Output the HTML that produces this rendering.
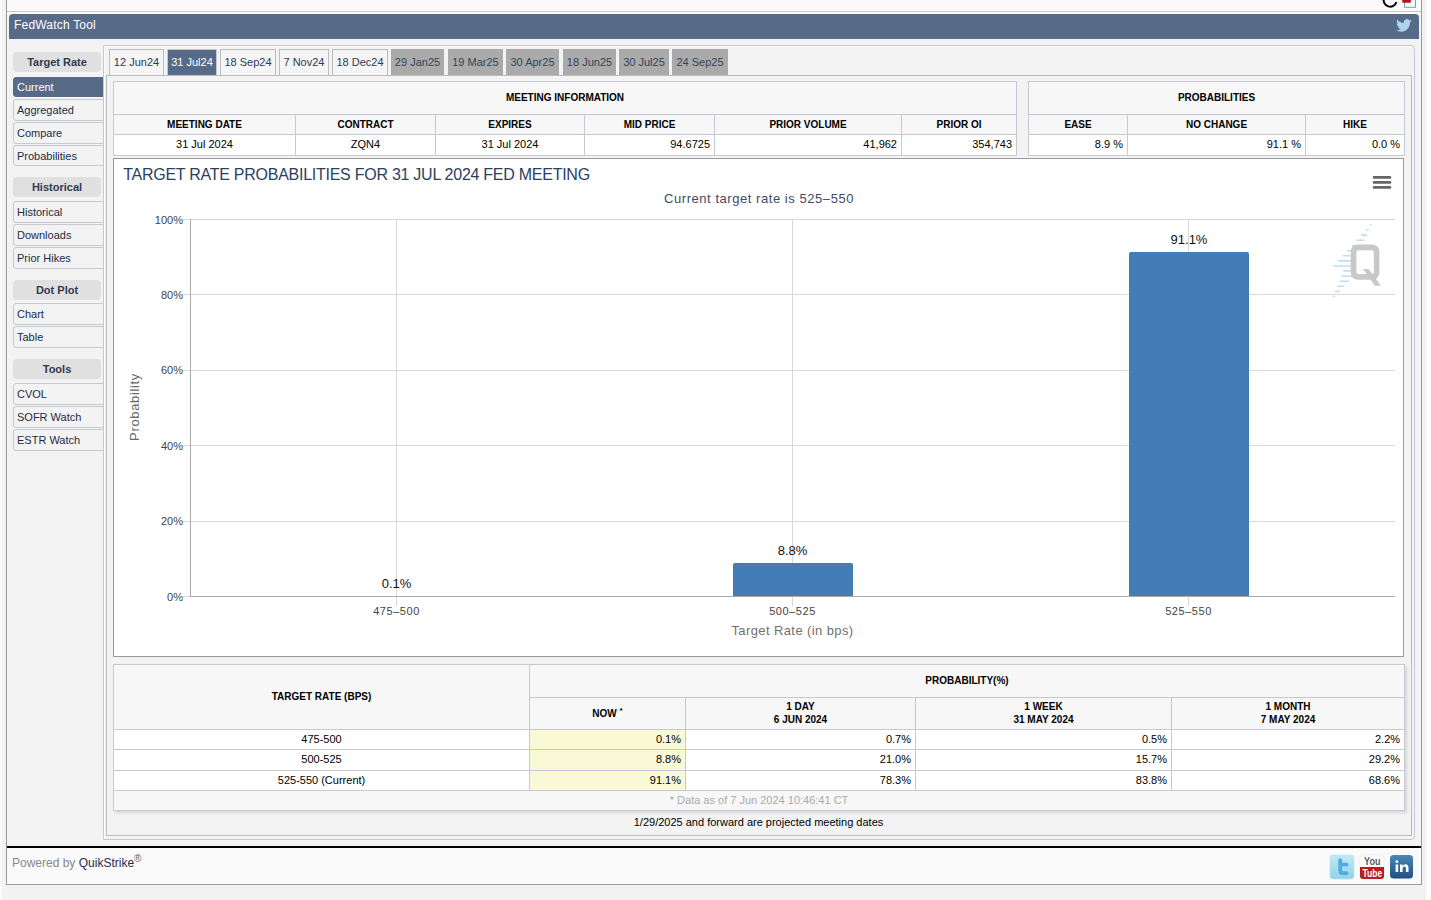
<!DOCTYPE html>
<html><head><meta charset="utf-8">
<style>
*{box-sizing:border-box;margin:0;padding:0}
html,body{width:1431px;height:900px;overflow:hidden;background:#fff;font-family:"Liberation Sans",sans-serif;font-size:11px;color:#000}
.a{position:absolute}
#bgstrip{left:0;top:0;width:1426px;height:900px;background:#f2f2f2;border-left:2px solid #fafafa}
#outer{left:6px;top:-2px;width:1416px;height:887px;border:1px solid #999;background:#f3f3f3}
#topwhite{left:7px;top:0;width:1414px;height:11px;background:#fafafa}
#topline{left:7px;top:11px;width:1414px;height:1px;background:#c8c8c8}
#topwhite2{left:7px;top:12px;width:1414px;height:2px;background:#fafafa}
#hdr{left:9px;top:14px;width:1410px;height:25px;background:#576a87;border-radius:4px 4px 0 0;color:#fff;font-size:12px;line-height:23px;padding-left:5px;letter-spacing:0.2px}
.sbh{left:13px;width:88px;height:20px;background:#e0e0e0;border-radius:4px;font-weight:bold;text-align:center;line-height:20px;color:#2e3a52;font-size:11px}
.sbb{left:13px;width:92px;height:22px;border:1px solid #c6c8d2;border-radius:3px;background:#f3f3f3;line-height:21px;padding-left:3px;color:#1d2a44;font-size:11px}
.sbb.act{background:#576a87;border-color:#576a87;color:#fff}
#tabpanel{left:103px;top:45px;width:1312px;height:795px;border:1px solid #c6c8d2;border-radius:0 4px 4px 0;background:#f3f3f3;box-shadow:inset 1px 1px 0 #fcfcfc}
#content{left:106px;top:75px;width:1306px;height:761px;border:1px solid #bbb;background:#f3f3f3}
.tab{top:49px;height:26px;border:1px solid #bdbdbd;border-bottom:none;background:#f5f5f5;color:#2c3a52;font-size:11px;line-height:24px;text-align:center}
.tab.act{background:#576a87;color:#fff;border-color:#c6c8d2}
.tab.proj{background:#aaa;border-color:#aaa;color:#36445a}
table{border-collapse:collapse;table-layout:fixed}
td,th{border:1px solid #c6c8d2;font-size:11px;padding:0 4px}
th{font-weight:bold;background:#f7f7f7;text-align:center;font-size:10px}
td{background:#fff}
td.y{background:#f9f9d6}
.dr td{padding-bottom:2px}
#bt th{padding-bottom:2px}
.hr th{padding-bottom:2px}
.r{text-align:right}
.c{text-align:center}
#chart{left:113px;top:158px;width:1291px;height:499px;border:1px solid #999;background:#fff;overflow:hidden}
</style></head><body>
<div class="a" id="bgstrip"></div>
<div class="a" id="outer"></div>
<div class="a" id="topwhite"></div>
<div class="a" id="topline"></div>
<div class="a" id="topwhite2"></div>
<div class="a" id="hdr">FedWatch Tool</div>

<!-- sidebar -->
<div class="a sbh" style="top:52px">Target Rate</div>
<div class="a sbb act" style="top:77px;height:20px;line-height:18px;padding-top:0">Current</div>
<div class="a sbb" style="top:99px;height:22px;line-height:20px">Aggregated</div>
<div class="a sbb" style="top:122px;height:22px;line-height:20px">Compare</div>
<div class="a sbb" style="top:145px;height:21px;line-height:20px">Probabilities</div>
<div class="a sbh" style="top:177px">Historical</div>
<div class="a sbb" style="top:201px">Historical</div>
<div class="a sbb" style="top:224px">Downloads</div>
<div class="a sbb" style="top:247px">Prior Hikes</div>
<div class="a sbh" style="top:280px">Dot Plot</div>
<div class="a sbb" style="top:303px">Chart</div>
<div class="a sbb" style="top:326px">Table</div>
<div class="a sbh" style="top:359px">Tools</div>
<div class="a sbb" style="top:383px">CVOL</div>
<div class="a sbb" style="top:406px">SOFR Watch</div>
<div class="a sbb" style="top:429px">ESTR Watch</div>

<div class="a" id="tabpanel"></div>
<div class="a" id="content"></div>

<!-- tabs -->
<div class="a tab" style="left:109px;width:55px">12 Jun24</div>
<div class="a tab act" style="left:167px;width:50px">31 Jul24</div>
<div class="a tab" style="left:220px;width:56px">18 Sep24</div>
<div class="a tab" style="left:279px;width:50px">7 Nov24</div>
<div class="a tab" style="left:332px;width:56px">18 Dec24</div>
<div class="a tab proj" style="left:391px;width:53px">29 Jan25</div>
<div class="a tab proj" style="left:448px;width:55px">19 Mar25</div>
<div class="a tab proj" style="left:506px;width:53px">30 Apr25</div>
<div class="a tab proj" style="left:563px;width:53px">18 Jun25</div>
<div class="a tab proj" style="left:619px;width:50px">30 Jul25</div>
<div class="a tab proj" style="left:672px;width:56px">24 Sep25</div>

<!-- meeting info table -->
<table class="a" style="left:113px;top:81px;width:903px">
<colgroup><col style="width:182px"><col style="width:140px"><col style="width:149px"><col style="width:130px"><col style="width:187px"><col style="width:115px"></colgroup>
<tr style="height:33px" class="hr"><th colspan="6">MEETING INFORMATION</th></tr>
<tr style="height:20px"><th>MEETING DATE</th><th>CONTRACT</th><th>EXPIRES</th><th>MID PRICE</th><th>PRIOR VOLUME</th><th>PRIOR OI</th></tr>
<tr style="height:21px" class="dr"><td class="c">31 Jul 2024</td><td class="c">ZQN4</td><td class="c">31 Jul 2024</td><td class="r">94.6725</td><td class="r">41,962</td><td class="r">354,743</td></tr>
</table>

<table class="a" style="left:1028px;top:81px;width:376px">
<colgroup><col style="width:99px"><col style="width:178px"><col style="width:99px"></colgroup>
<tr style="height:33px" class="hr"><th colspan="3">PROBABILITIES</th></tr>
<tr style="height:20px"><th>EASE</th><th>NO CHANGE</th><th>HIKE</th></tr>
<tr style="height:21px" class="dr"><td class="r">8.9 %</td><td class="r">91.1 %</td><td class="r">0.0 %</td></tr>
</table>

<div class="a" id="chart"></div>

<svg class="a" style="left:0;top:0" width="1431" height="900">
<g font-family="Liberation Sans, sans-serif">
<text x="123.2" y="180" font-size="16" fill="#2a3f63" letter-spacing="-0.26">TARGET RATE PROBABILITIES FOR 31 JUL 2024 FED MEETING</text>
<text x="759" y="202.5" font-size="13" fill="#3c4b66" text-anchor="middle" letter-spacing="0.55">Current target rate is 525–550</text>
<path d="M1374 177.4H1390M1374 182.4H1390M1374 187.4H1390" stroke="#666" stroke-width="2.6" stroke-linecap="round"/>
<g stroke="#d8d8d8" stroke-width="1">
<path d="M182 219.5H1395M182 294.5H1395M182 370.5H1395M182 445.5H1395M182 521.5H1395M182 596.5H190"/>
<path d="M396.5 219.5V606M792.5 219.5V606M1188.5 219.5V606"/>
</g>
<g fill="#437db5">
<path d="M336 596.2H456V596.5H336Z"/>
<path d="M733 596.5V565a2 2 0 0 1 2-2H851a2 2 0 0 1 2 2V596.5Z"/>
<path d="M1129 596.5V254a2 2 0 0 1 2-2H1247a2 2 0 0 1 2 2V596.5Z"/>
</g>
<path d="M190.5 219V597" stroke="#aaa" stroke-width="1"/>
<path d="M190 596.5H1395" stroke="#aaa" stroke-width="1.2"/>
<g font-size="11" fill="#444" text-anchor="end">
<text x="183" y="223.5">100%</text>
<text x="183" y="298.5">80%</text>
<text x="183" y="374">60%</text>
<text x="183" y="449.5">40%</text>
<text x="183" y="525">20%</text>
<text x="183" y="600.5">0%</text>
</g>
<text transform="translate(138.6 407) rotate(-90)" font-size="13" fill="#6a6a6a" text-anchor="middle" letter-spacing="0.65">Probability</text>
<g font-size="11" fill="#444" text-anchor="middle" letter-spacing="0.55">
<text x="396.5" y="615">475–500</text>
<text x="792.5" y="615">500–525</text>
<text x="1188.5" y="615">525–550</text>
</g>
<text x="792.5" y="635" font-size="13" fill="#707070" text-anchor="middle" letter-spacing="0.4">Target Rate (in bps)</text>
<g font-size="13" fill="#111" text-anchor="middle">
<text x="396.5" y="588">0.1%</text>
<text x="792.5" y="555">8.8%</text>
<text x="1189" y="244">91.1%</text>
</g>
<g stroke="#c2dcf6" stroke-width="1.6">
<path d="M1369.8 225H1371.6M1365.8 230H1368.9M1361.3 235.1H1366.9M1356.4 240.3H1364.9M1351.8 245.5H1357M1347 250.7H1351.5M1342.7 255.7H1350.7M1338.2 260.9H1350.7M1333.3 266H1350.7M1343.3 270.9H1350.7M1341.3 276.2H1352.4M1339.4 281.3H1349.2M1337.3 286.2H1344.4M1335.1 291.4H1340M1333.2 296.4H1335.1"/>
</g>
<path fill="#c8c8c8" fill-rule="evenodd" d="M1359 244.4H1371.5Q1379.4 244.4 1379.4 252.3V271.8Q1379.4 279.7 1371.5 279.7H1358.6Q1350.7 279.7 1350.7 271.8V252.3Q1350.7 244.4 1358.6 244.4ZM1358.5 250.2Q1356.4 250.2 1356.4 252.3V271.8Q1356.4 274 1358.5 274H1371.6Q1373.8 274 1373.8 271.8V252.3Q1373.8 250.2 1371.6 250.2Z"/>
<path fill="#c8c8c8" d="M1363 268.9H1368.6L1380.9 285.8H1374.8Z"/>
</g>
</svg>

<table class="a dr" id="bt" style="left:113px;top:664px;width:1291px;box-shadow:2px 2px 3px rgba(0,0,0,0.12)">
<colgroup><col style="width:416px"><col style="width:156px"><col style="width:230px"><col style="width:256px"><col style="width:233px"></colgroup>
<tr style="height:33px"><th rowspan="2" style="font-size:10px">TARGET RATE (BPS)</th><th colspan="4" style="font-size:10px">PROBABILITY(%)</th></tr>
<tr style="height:32px"><th style="font-size:10px">NOW <sup style="font-size:8px;vertical-align:4px">*</sup></th><th style="font-size:10px;line-height:13px">1 DAY<br>6 JUN 2024</th><th style="font-size:10px;line-height:13px">1 WEEK<br>31 MAY 2024</th><th style="font-size:10px;line-height:13px">1 MONTH<br>7 MAY 2024</th></tr>
<tr style="height:20px"><td class="c">475-500</td><td class="r y">0.1%</td><td class="r">0.7%</td><td class="r">0.5%</td><td class="r">2.2%</td></tr>
<tr style="height:21px"><td class="c">500-525</td><td class="r y">8.8%</td><td class="r">21.0%</td><td class="r">15.7%</td><td class="r">29.2%</td></tr>
<tr style="height:20px"><td class="c">525-550 (Current)</td><td class="r y">91.1%</td><td class="r">78.3%</td><td class="r">83.8%</td><td class="r">68.6%</td></tr>
<tr style="height:20px"><td colspan="5" class="c" style="background:#f7f7f7;color:#aaa;padding-bottom:2px">* Data as of 7 Jun 2024 10:46:41 CT</td></tr>
</table>
<div class="a" style="left:113px;top:815px;width:1291px;text-align:center;font-size:11px;line-height:14px">1/29/2025 and forward are projected meeting dates</div>

<div class="a" style="left:7px;top:846px;width:1414px;height:2px;background:#000"></div>
<div class="a" style="left:7px;top:848px;width:1414px;height:36px;background:#fafafa"></div>
<div class="a" style="left:12px;top:852px;font-size:12px;color:#888;line-height:14px">Powered by <span style="color:#1d2d4f">QuikStrike</span><sup style="font-size:10px;color:#666">&reg;</sup></div>



<svg class="a" style="left:0;top:0" width="1431" height="900">
<path d="M1396.4 1.9A6.5 6.5 0 1 1 1383.9 -1.7" fill="none" stroke="#000" stroke-width="2"/>
<rect x="1404.5" y="-1" width="11" height="8.3" fill="#f6fafa" stroke="#8b9a9a" stroke-width="1"/>
<path d="M1402.2 0H1410.9V1.7Q1410.9 2.7 1409.9 2.7H1403.2Q1402.2 2.7 1402.2 1.7Z" fill="#b3191b"/>
<g transform="translate(1396.2 17.75) scale(0.642)"><path fill="#aed3f2" d="M23.953 4.57a10 10 0 01-2.825.775 4.958 4.958 0 002.163-2.723c-.951.555-2.005.959-3.127 1.184a4.920 4.920 0 00-8.384 4.482C7.690 8.095 4.067 6.130 1.640 3.162a4.822 4.822 0 00-.666 2.475c0 1.710.870 3.213 2.188 4.096a4.904 4.904 0 01-2.228-.616v.06a4.923 4.923 0 003.946 4.827 4.996 4.996 0 01-2.212.085 4.936 4.936 0 004.604 3.417 9.867 9.867 0 01-6.102 2.105c-.390 0-.779-.023-1.170-.067a13.995 13.995 0 007.557 2.209c9.053 0 13.998-7.496 13.998-13.985 0-.210 0-.420-.015-.630A9.935 9.935 0 0024 4.590z"/></g>
<defs>
<linearGradient id="tw" x1="0" y1="0" x2="0" y2="1"><stop offset="0" stop-color="#c4e8f4"/><stop offset="1" stop-color="#8fd3e6"/></linearGradient>
<linearGradient id="li" x1="0" y1="0" x2="0" y2="1"><stop offset="0" stop-color="#4a87b5"/><stop offset="1" stop-color="#205080"/></linearGradient>
</defs>
<rect x="1330" y="855" width="24" height="24" rx="3" fill="url(#tw)" stroke="#bfe3ef" stroke-width="0.8"/>
<path d="M1340.2 860.2V870.5Q1340.2 873.2 1343 873.2H1346.5M1340.2 864.6H1346.5" fill="none" stroke="#52abe0" stroke-width="3.8" stroke-linecap="round"/>
<rect x="1360" y="855" width="24" height="24" rx="3" fill="#fff" stroke="#e4e4e4" stroke-width="0.6"/>
<path d="M1360 867H1384V876Q1384 879 1381 879H1363Q1360 879 1360 876Z" fill="#b5201e"/>
<text x="1364" y="865.4" font-family="Liberation Sans, sans-serif" font-weight="bold" font-size="11" fill="#5a5a5a" textLength="16.5" lengthAdjust="spacingAndGlyphs">You</text>
<text x="1362.5" y="877" font-family="Liberation Sans, sans-serif" font-weight="bold" font-size="11" fill="#fff" textLength="19.7" lengthAdjust="spacingAndGlyphs">Tube</text>
<rect x="1390" y="855" width="23" height="23.5" rx="3.5" fill="url(#li)"/>
<rect x="1395.6" y="864.5" width="2.6" height="7.5" fill="#fff"/>
<circle cx="1396.9" cy="861.7" r="1.4" fill="#fff"/>
<path d="M1400 872V864.5H1402.6V866Q1403.6 864.3 1405.6 864.3Q1408.5 864.3 1408.5 867.8V872H1405.9V868.3Q1405.9 866.5 1404.6 866.5Q1402.6 866.5 1402.6 868.8V872Z" fill="#fff"/>
</svg>
</body></html>
